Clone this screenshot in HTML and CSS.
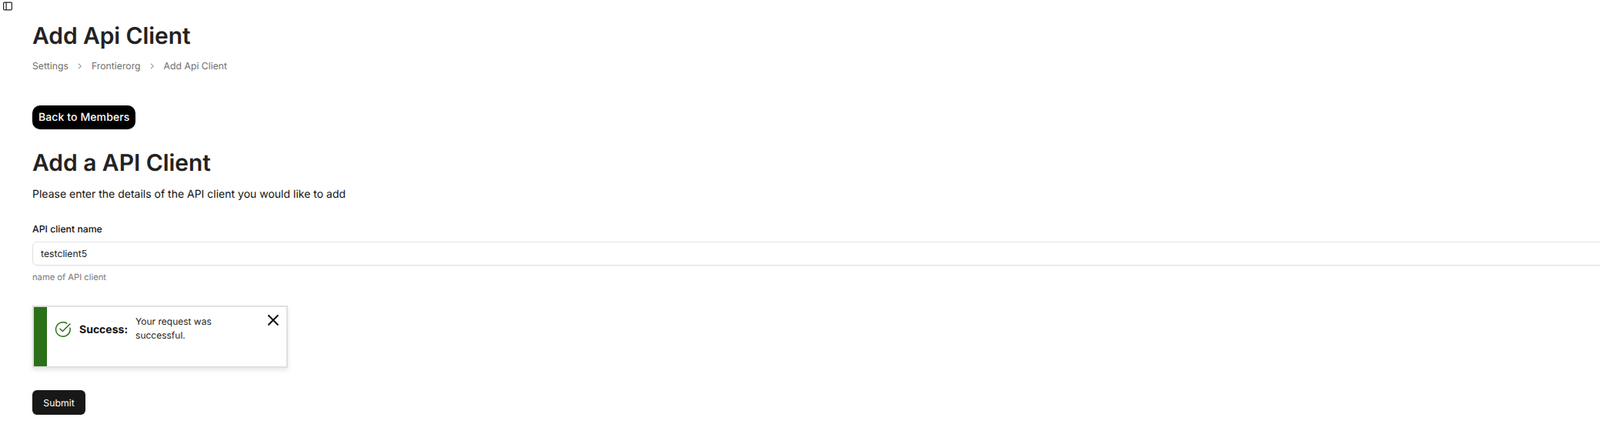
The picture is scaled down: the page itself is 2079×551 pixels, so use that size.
FILE: index.html
```html
<!DOCTYPE html>
<html lang="en">
<head>
    <meta charset="UTF-8">
    <title>Add Api Client</title>
    <link rel="stylesheet" href="styles.css">
</head>
<body>
    <button class="sidebar-toggle" aria-label="Toggle sidebar">
        <svg xmlns="http://www.w3.org/2000/svg" width="14" height="14" viewBox="0 0 14 14" fill="none" stroke="currentColor" stroke-width="1.2">
            <rect x="1.6" y="2.1" width="10.8" height="9.8" rx="1.2"></rect>
            <line x1="5.1" y1="2.1" x2="5.1" y2="11.9"></line>
        </svg>
    </button>
    <main class="content">
        <h1 class="page-title">Add Api Client</h1>
        <nav class="breadcrumb">
            <span>Settings</span>
            <svg class="crumb-sep" xmlns="http://www.w3.org/2000/svg" width="8" height="8" viewBox="0 0 8 8" fill="none" stroke="currentColor" stroke-width="1">
                <path d="M2 .8 5.4 4 2 7.2"></path>
            </svg>
            <span>Frontierorg</span>
            <svg class="crumb-sep" xmlns="http://www.w3.org/2000/svg" width="8" height="8" viewBox="0 0 8 8" fill="none" stroke="currentColor" stroke-width="1">
                <path d="M2 .8 5.4 4 2 7.2"></path>
            </svg>
            <span>Add Api Client</span>
        </nav>
        <a class="back-button" href="#">Back to Members</a>
        <h2 class="form-title">Add a API Client</h2>
        <p class="form-intro">Please enter the details of the API client you would like to add</p>
        <form class="client-form">
            <label class="field-label" for="client-name">API client name</label>
            <input class="field-input" id="client-name" type="text" value="testclient5">
            <div class="field-help">name of API client</div>
            <div class="alert">
                <div class="alert-bar"></div>
                <svg class="alert-icon" xmlns="http://www.w3.org/2000/svg" width="22" height="22" viewBox="0 0 22 22" fill="none" stroke="#2a7018" stroke-width="1.5" stroke-linecap="round" stroke-linejoin="round">
                    <path d="M20 9.2A9.3 9.3 0 1 1 15.6 3"></path>
                    <path d="M7 10.2l3.4 3.3L20 4"></path>
                </svg>
                <strong class="alert-label">Success:</strong>
                <div class="alert-text">Your request was successful.</div>
                <svg class="alert-close" xmlns="http://www.w3.org/2000/svg" width="16" height="16" viewBox="0 0 16 16" fill="none" stroke="#111" stroke-width="2">
                    <path d="M1.5 1.5l13 13M14.5 1.5l-13 13"></path>
                </svg>
            </div>
            <button class="submit-button" type="button">Submit</button>
        </form>
    </main>
</body>
</html>
```

FILE: styles.css
```css
* {
    margin: 0;
    padding: 0;
    box-sizing: border-box;
    font-family: 'Inter', sans-serif;
    text-rendering: geometricPrecision;
}

html, body {
    height: 551px;
    overflow: hidden;
}

body {
    background-color: white;
    color: #111;
}

.sidebar-toggle {
    display: block;
    width: 14px;
    height: 14px;
    margin: 1px 0 0 3px;
    background: none;
    border: none;
    color: #222;
}

.content {
    padding: 14px 0 0 42px;
}

.page-title {
    font-size: 30px;
    line-height: 36px;
    font-weight: 600;
    letter-spacing: -0.1px;
    color: #222;
}

.breadcrumb {
    display: flex;
    align-items: center;
    gap: 9.5px;
    margin-top: 11px;
    font-size: 12.25px;
    line-height: 20px;
    color: #707070;
}

.crumb-sep {
    margin: 0 1.5px;
}

.back-button {
    display: block;
    width: fit-content;
    margin-top: 41px;
    padding: 0 8px;
    height: 31px;
    line-height: 31px;
    background-color: black;
    color: white;
    border-radius: 10px;
    font-size: 14px;
    font-weight: 500;
    letter-spacing: 0.1px;
    text-decoration: none;
    box-shadow: 0 1px 2px rgba(0,0,0,0.12);
}

.form-title {
    margin-top: 24px;
    font-size: 30px;
    line-height: 40px;
    font-weight: 600;
    letter-spacing: -0.05px;
    color: #222;
}

.form-intro {
    margin-top: 11px;
    font-size: 14px;
    line-height: 20px;
}

.client-form {
    margin-top: 25px;
}

.field-label {
    display: block;
    font-size: 12.25px;
    line-height: 20px;
    font-weight: 500;
}

.field-input {
    display: block;
    width: 2200px;
    height: 31px;
    margin-top: 6px;
    padding: 0 10px;
    border: 1px solid #e2e2e2;
    border-radius: 6px;
    outline: none;
    font-size: 12.25px;
    color: #222;
    box-shadow: 0 1px 2px rgba(0,0,0,0.05);
}

.field-help {
    margin-top: 5px;
    font-size: 11.2px;
    line-height: 20px;
    color: #777;
}

.alert {
    display: flex;
    align-items: flex-start;
    position: relative;
    width: 332px;
    height: 81px;
    margin-top: 27px;
    border: 2px solid #e0e0e0;
    background-color: white;
    box-shadow: 0 3px 6px rgba(0,0,0,0.1);
}

.alert-bar {
    width: 17px;
    height: 100%;
    background-color: #2a7018;
    flex-shrink: 0;
}

.alert-icon {
    margin: 18px 0 0 10px;
    flex-shrink: 0;
}

.alert-label {
    margin: 20px 0 0 10px;
    font-size: 14px;
    line-height: 20px;
    font-weight: 700;
}

.alert-text {
    width: 130px;
    margin: 10px 0 0 10px;
    font-size: 12px;
    line-height: 18px;
    color: #222;
}

.alert-close {
    position: absolute;
    top: 9px;
    right: 9px;
}

.submit-button {
    display: block;
    width: 69px;
    height: 32px;
    margin-top: 29px;
    background-color: #181818;
    color: white;
    border: none;
    border-radius: 6px;
    font-size: 12.25px;
}
```
